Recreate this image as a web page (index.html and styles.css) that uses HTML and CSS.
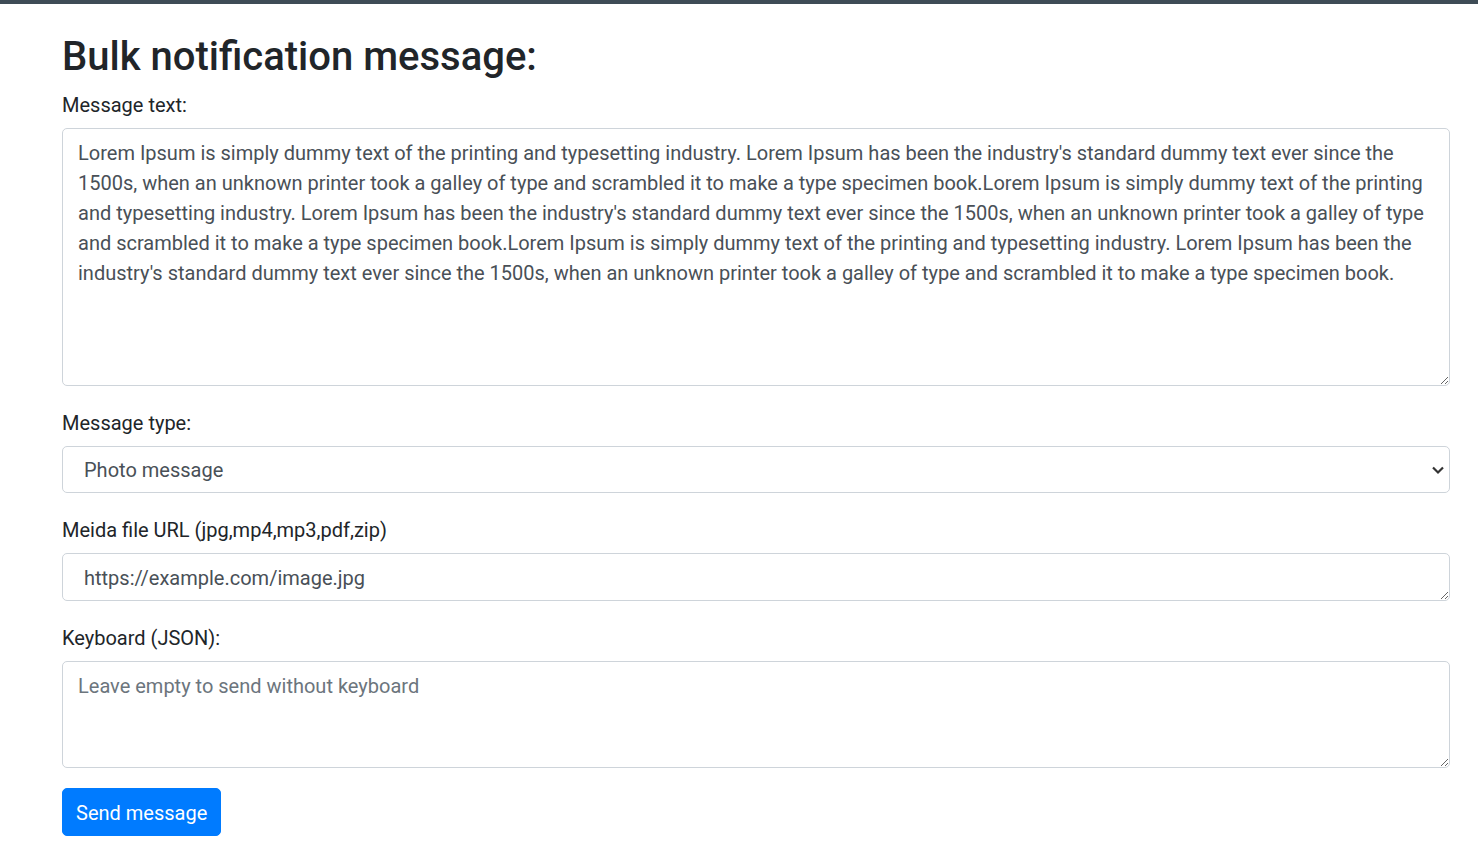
FILE: index.html
```html
<!DOCTYPE html>
<html lang="en">
<head>
<meta charset="utf-8">
<title>Bulk notification message</title>
<link rel="stylesheet" href="styles.css">
</head>
<body>
<div class="topbar"></div>
<main class="page">
  <h2 class="title">Bulk notification message:</h2>
  <form class="form">
    <div class="group">
      <label class="label" for="msg">Message text:</label>
      <textarea id="msg" class="control area-text">Lorem Ipsum is simply dummy text of the printing and typesetting industry. Lorem Ipsum has been the industry's standard dummy text ever since the 1500s, when an unknown printer took a galley of type and scrambled it to make a type specimen book.Lorem Ipsum is simply dummy text of the printing and typesetting industry. Lorem Ipsum has been the industry's standard dummy text ever since the 1500s, when an unknown printer took a galley of type and scrambled it to make a type specimen book.Lorem Ipsum is simply dummy text of the printing and typesetting industry. Lorem Ipsum has been the industry's standard dummy text ever since the 1500s, when an unknown printer took a galley of type and scrambled it to make a type specimen book.</textarea>
    </div>
    <div class="group">
      <label class="label" for="type">Message type:</label>
      <div class="select-wrap">
        <select id="type" class="control select">
          <option>Photo message</option>
          <option>Text message</option>
        </select>
        <svg class="chevron" width="14" height="10" viewBox="0 0 14 10" aria-hidden="true"><path d="M2 2.5 L7 7.5 L12 2.5" fill="none" stroke="#333" stroke-width="2.2"/></svg>
      </div>
    </div>
    <div class="group">
      <label class="label" for="url">Meida file URL (jpg,mp4,mp3,pdf,zip)</label>
      <textarea id="url" class="control area-url" rows="1">https://example.com/image.jpg</textarea>
    </div>
    <div class="group">
      <label class="label" for="kb">Keyboard (JSON):</label>
      <textarea id="kb" class="control area-kb" placeholder="Leave empty to send without keyboard"></textarea>
    </div>
    <button type="button" class="btn">Send message</button>
  </form>
</main>
</body>
</html>
```
FILE: styles.css
```css
* { box-sizing: border-box; }
html, body { margin: 0; padding: 0; }
body {
  font-family: Roboto, "Liberation Sans", sans-serif;
  font-size: 20px;
  line-height: 30px;
  color: #212529;
  background: #fff;
}
.topbar {
  height: 4px;
  background: #3e4c56;
}
.page {
  padding: 29px 28px 20px 62px;
}
.title {
  margin: 0 0 7px 0;
  font-size: 40px;
  font-weight: 500;
  line-height: 48px;
  color: #212529;
}
.form { margin: 0; }
.group { margin-bottom: 20px; }
.label {
  display: inline-block;
  padding-top: 2px;
  margin-bottom: 8px;
}
.control {
  display: block;
  width: 100%;
  font-family: inherit;
  font-size: 20px;
  line-height: 30px;
  color: #495057;
  background: #fff;
  border: 1px solid #ced4da;
  border-radius: 5px;
  padding: 9px 15px 5px;
  margin: 0;
  outline: none;
}
.control::placeholder { color: #6c757d; opacity: 1; }
.area-text { height: 258px; resize: vertical; }
.area-url { height: 48px; padding-left: 21px; resize: vertical; }
.area-kb { height: 107px; resize: vertical; }
.select-wrap { position: relative; }
.select {
  height: 47px;
  padding: 8px 15px 7px 21px;
  -webkit-appearance: none;
  appearance: none;
}
.chevron {
  position: absolute;
  right: 5px;
  top: 19px;
  pointer-events: none;
}
.btn {
  font-family: inherit;
  font-size: 20px;
  line-height: 30px;
  color: #fff;
  background: #007bff;
  border: 1px solid #007bff;
  border-radius: 5px;
  padding: 9px 13px 7px;
  cursor: pointer;
}
```
